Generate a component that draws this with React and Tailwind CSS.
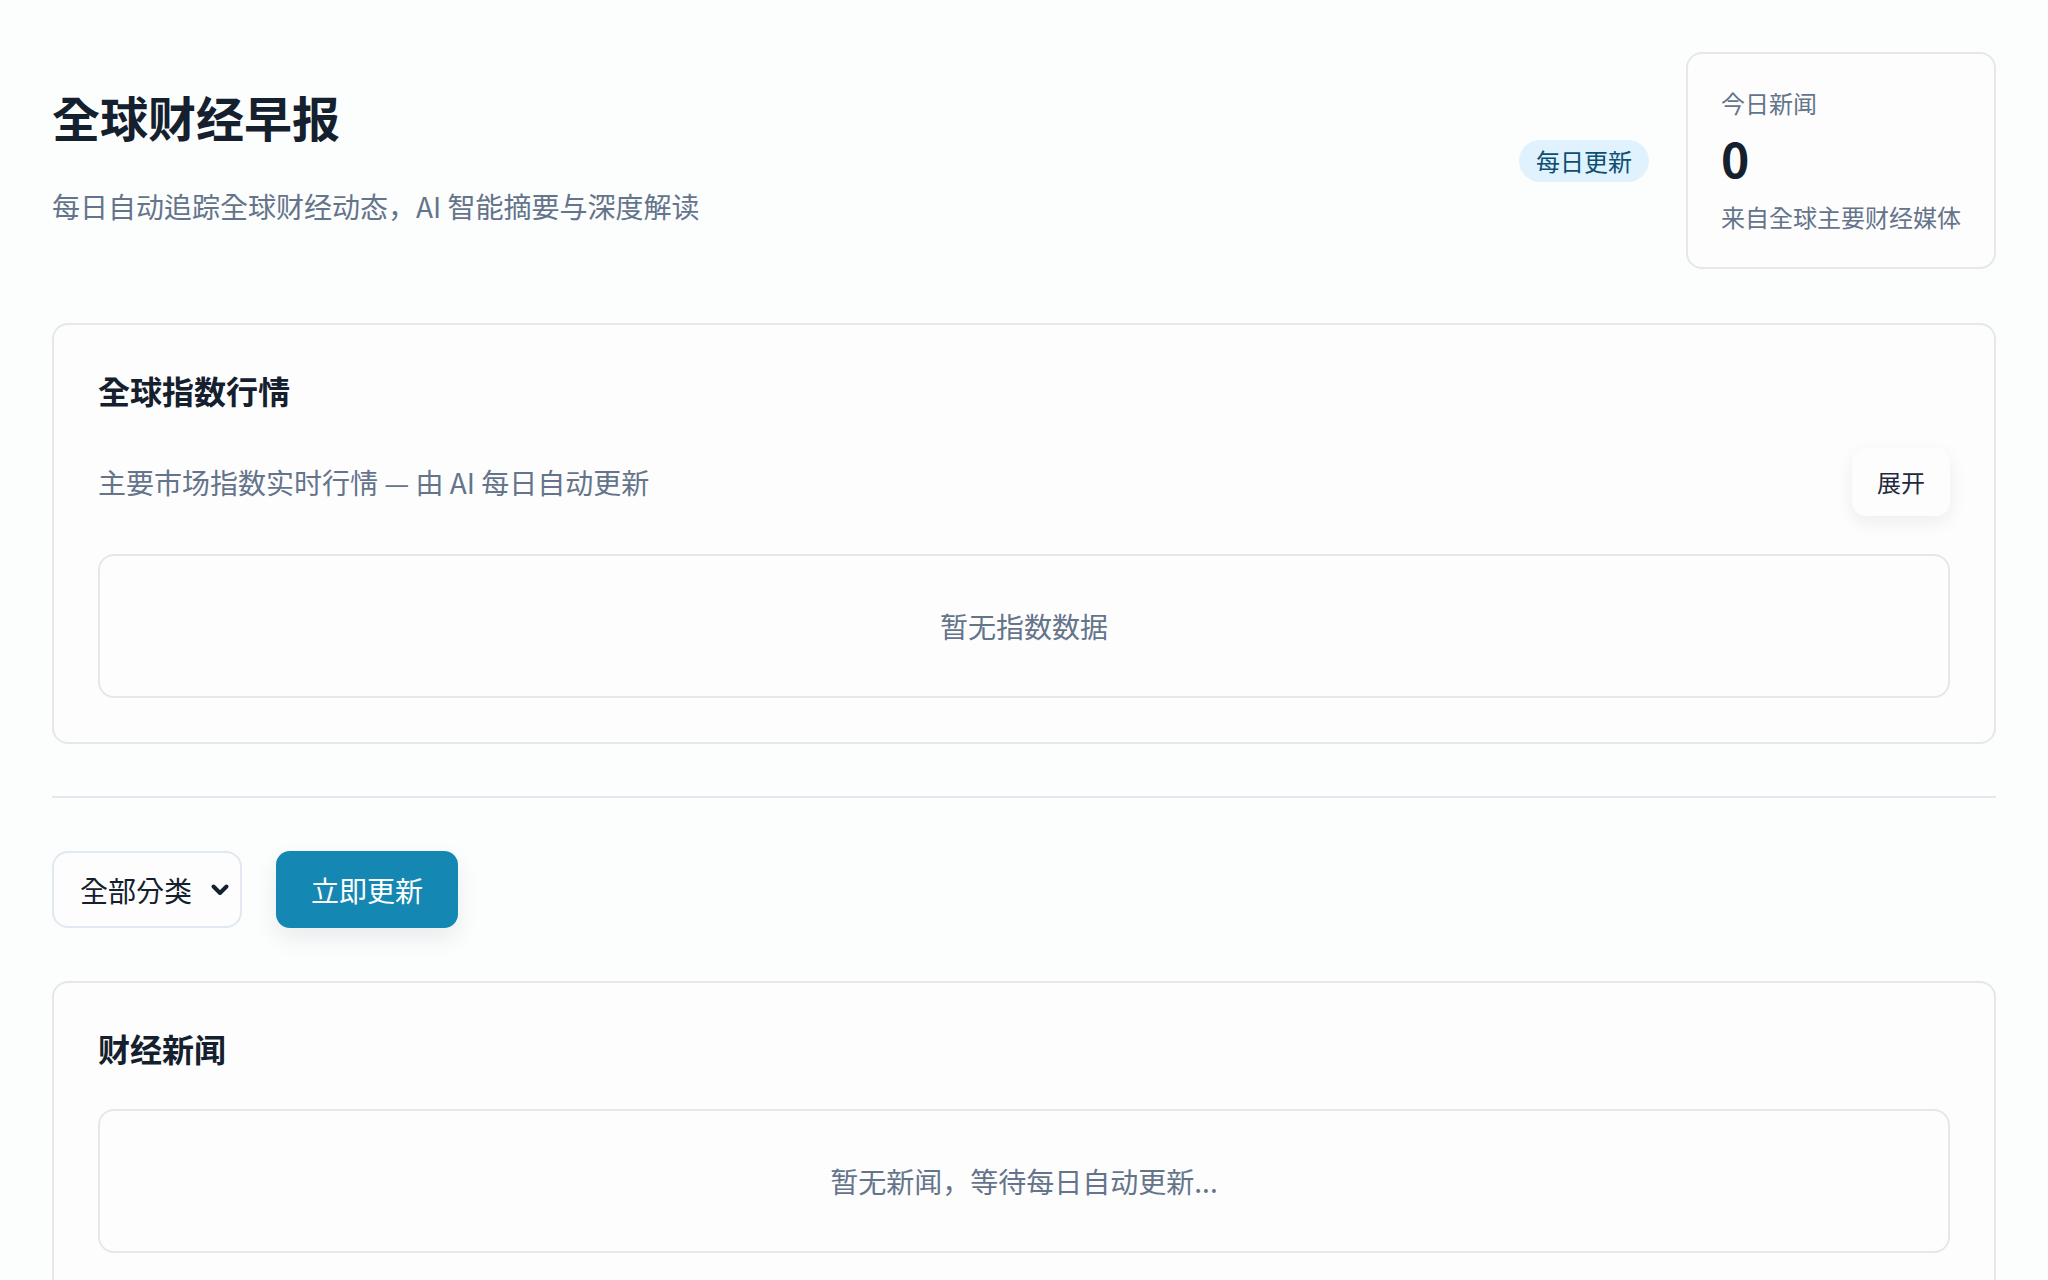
import React from "react";

// --- Small pieces ---
const Badge = ({ children }) => (
  <span className="inline-flex items-center h-[42px] px-[17px] rounded-full bg-[#e0f2fe] text-[#0c4f73] text-[24px] leading-none">
    {children}
  </span>
);

const StatCard = ({ label, value, note }) => (
  <div className="border-2 border-[#e5e7eb] rounded-2xl bg-[#fdfdfd] px-[33px] pt-[31px] pb-[32px]">
    <p className="text-[24px] leading-[36px] text-[#64748b]">{label}</p>
    <p className="mt-[7px] text-[48px] leading-[58px] font-bold text-[#15202e]">{value}</p>
    <p className="mt-[13px] text-[24px] leading-[36px] text-[#64748b]">{note}</p>
  </div>
);

const EmptyBox = ({ text }) => (
  <div className="h-[144px] border-2 border-[#e5e7eb] rounded-2xl flex items-center justify-center text-[28px] leading-[42px] text-[#64748b]">
    {text}
  </div>
);

const Chevron = () => (
  <svg width="20" height="14" viewBox="0 0 20 14" className="text-[#15202e]">
    <path d="M3.5 3.5 L10 10 L16.5 3.5" fill="none" stroke="currentColor" strokeWidth="4" strokeLinecap="round" strokeLinejoin="round" />
  </svg>
);

export default function App() {
  return (
    <div
      className="min-h-screen bg-[#fcfdfd] text-[#15202e] px-[52px] pt-[52px] pb-[52px]"
      style={{ fontFamily: '"Noto Sans CJK KR", "Noto Sans CJK SC", "Noto Sans", sans-serif' }}
    >
      {/* --- Header --- */}
      <header className="flex items-center justify-between">
        <div className="-mt-[8px]">
          <h1 className="text-[48px] leading-[60px] font-bold text-[#15202e]">全球财经早报</h1>
          <p className="mt-[39px] text-[28px] leading-[42px] text-[#64748b]">
            每日自动追踪全球财经动态，AI 智能摘要与深度解读
          </p>
        </div>
        <div className="flex items-center gap-[37px]">
          <Badge>每日更新</Badge>
          <StatCard label="今日新闻" value="0" note="来自全球主要财经媒体" />
        </div>
      </header>

      {/* --- Index quotes --- */}
      <section className="mt-[54px] border-2 border-[#e5e7eb] rounded-2xl bg-[#fdfdfd] px-[44px] pt-[45px] pb-[44px]">
        <h2 className="text-[32px] leading-[40px] font-bold">全球指数行情</h2>
        <div className="mt-[38px] flex items-center justify-between">
          <p className="text-[28px] leading-[42px] text-[#64748b]">主要市场指数实时行情 — 由 AI 每日自动更新</p>
          <button className="h-[68px] px-[25px] rounded-[14px] bg-[#fdfdfd] text-[24px] leading-[36px] text-[#1e293b] shadow-[0_6px_18px_rgba(15,23,42,0.07)]">
            展开
          </button>
        </div>
        <div className="mt-[38px]">
          <EmptyBox text="暂无指数数据" />
        </div>
      </section>

      <div className="mt-[52px] h-[2px] bg-[#e2e8f0]" />

      {/* --- Controls --- */}
      <div className="mt-[53px] flex items-center gap-[34px]">
        <div className="h-[77px] w-[190px] border-2 border-[#e2e8f0] rounded-2xl bg-[#fdfdfd] flex items-center justify-between pl-[26px] pr-[10px] text-[28px] leading-[42px] text-[#15202e]">
          <span>全部分类</span>
          <Chevron />
        </div>
        <button className="h-[77px] w-[182px] rounded-[14px] bg-[#1487b2] text-white text-[28px] leading-[42px] shadow-[0_10px_24px_rgba(15,23,42,0.08)]">
          立即更新
        </button>
      </div>

      {/* --- News --- */}
      <section className="mt-[53px] border-2 border-[#e5e7eb] rounded-2xl bg-[#fdfdfd] px-[44px] pt-[45px] pb-[44px]">
        <h2 className="text-[32px] leading-[40px] font-bold">财经新闻</h2>
        <div className="mt-[41px]">
          <EmptyBox text="暂无新闻，等待每日自动更新..." />
        </div>
      </section>
    </div>
  );
}
